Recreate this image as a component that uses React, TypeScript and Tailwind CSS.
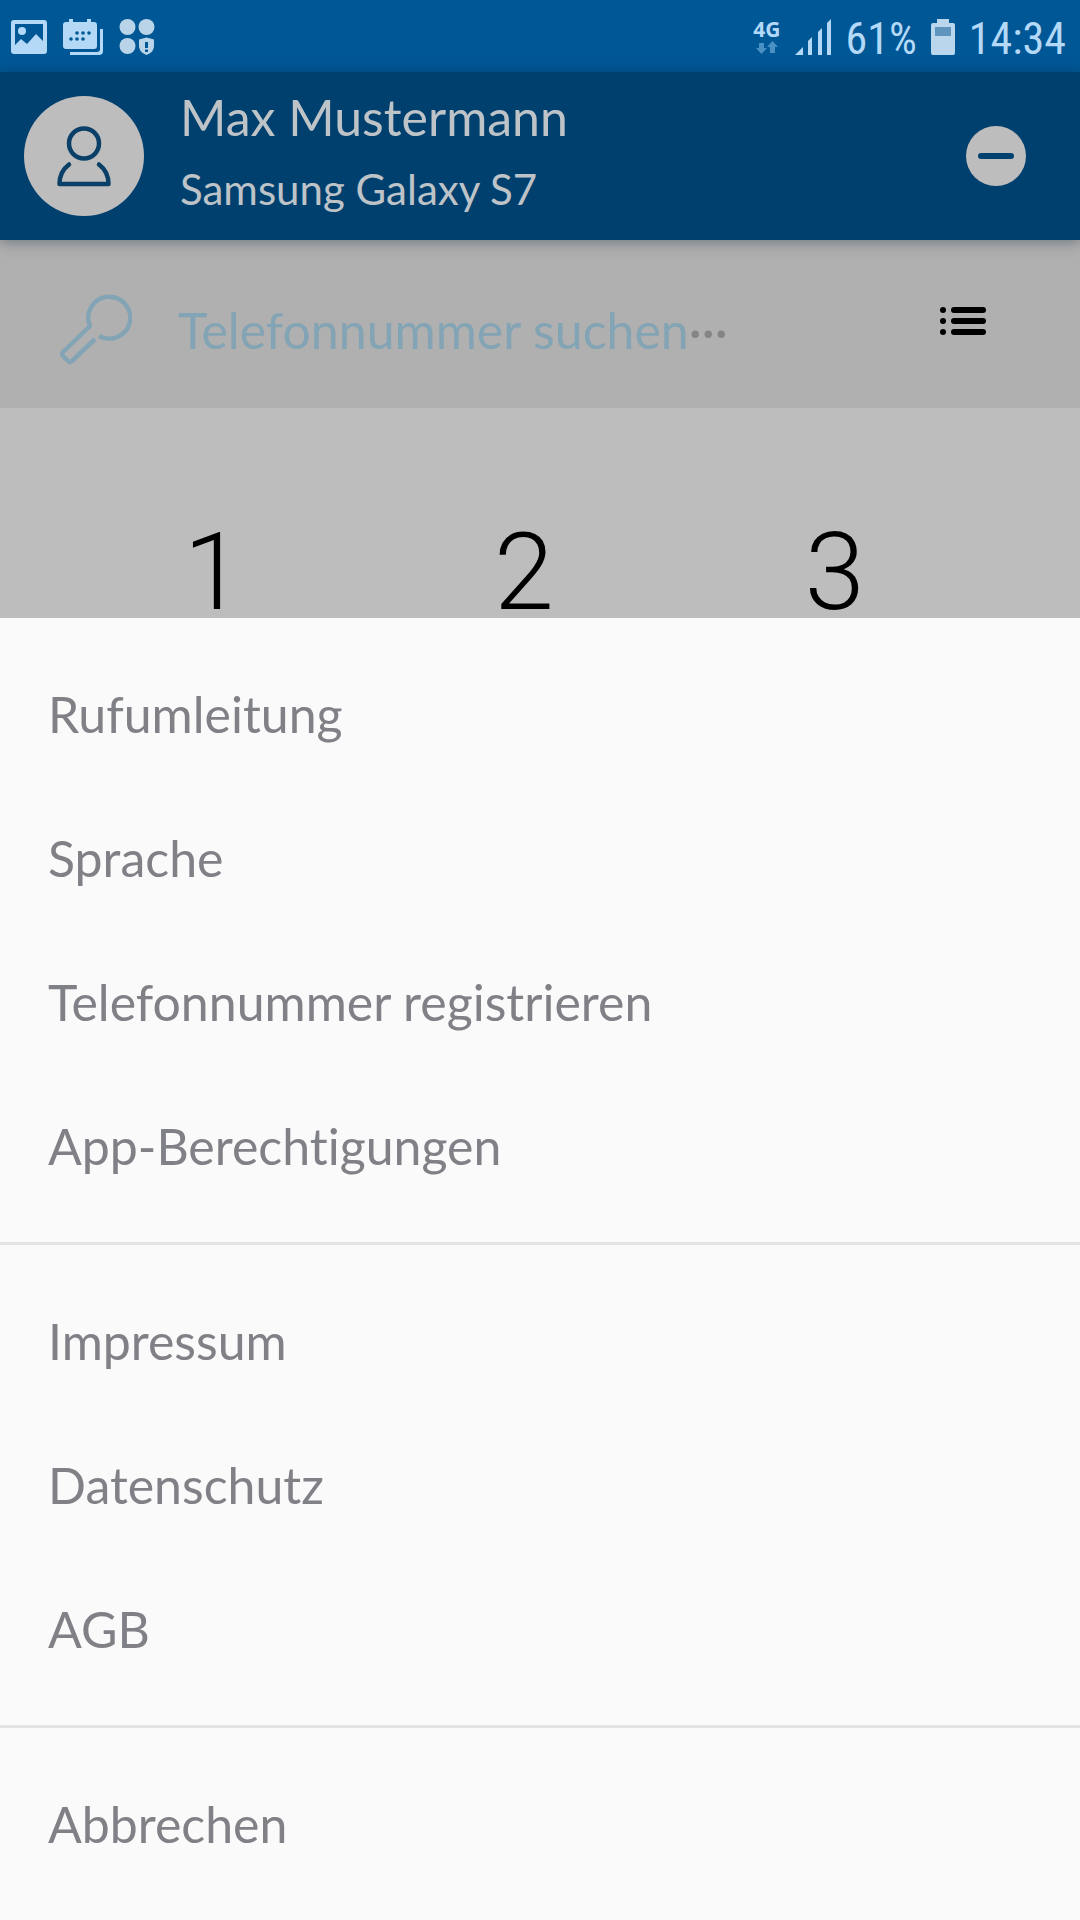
const mainItems = ["Rufumleitung", "Sprache", "Telefonnummer registrieren", "App-Berechtigungen"];
const legalItems = ["Impressum", "Datenschutz", "AGB"];

function StatusBar() {
  return (
    <div className="flex h-[72px] items-center justify-between bg-[#005796] pt-0.5 pr-3.5 pl-[11px] text-[#b3d9f7]">
      <div className="flex items-center gap-4">
        <svg width="36" height="34" viewBox="0 0 36 34" fill="currentColor">
          <path
            fillRule="evenodd"
            d="M3 0h30a3 3 0 0 1 3 3v28a3 3 0 0 1-3 3H3a3 3 0 0 1-3-3V3a3 3 0 0 1 3-3Zm1 4v21l6-6 6 5 9-10 7 7V4Z"
          />
          <circle cx="11" cy="11" r="4" />
        </svg>

        <svg width="40" height="36" viewBox="0 0 40 36">
          <path d="M37 10h3v22a4 4 0 0 1-4 4H7v-3h27a3 3 0 0 0 3-3Z" fill="currentColor" />
          <path d="M3 3h3V0h4v3h14V0h4v3h3a3 3 0 0 1 3 3v21a3 3 0 0 1-3 3H3a3 3 0 0 1-3-3V6a3 3 0 0 1 3-3Z" fill="currentColor" />
          <g fill="#005796">
            <circle cx="14" cy="14" r="1.8" />
            <circle cx="20" cy="14" r="1.8" />
            <circle cx="26" cy="14" r="1.8" />
            <circle cx="8" cy="20" r="1.8" />
            <circle cx="14" cy="20" r="1.8" />
            <circle cx="20" cy="20" r="1.8" />
          </g>
        </svg>

        <svg width="36" height="36" viewBox="0 0 36 36" fill="#b9d4e8">
          <circle cx="8.5" cy="8" r="8" />
          <circle cx="27.5" cy="8" r="8" />
          <circle cx="8.5" cy="27" r="8" />
          <path d="M27.5 18.5 35 20.5V27c0 4.5-3.500 7.5-7.5 9-4-1.500-7.5-4.500-7.5-9v-6.5Z" />
          <path d="M26 23h3v6h-3ZM26 30.500h3v2.500h-3Z" fill="#005796" />
        </svg>
      </div>

      <div className="flex items-center gap-3.5 font-['Roboto_Condensed',Roboto,sans-serif] text-[44px] leading-none">
        <div className="flex flex-col items-center gap-0.5">
          <span className="font-['Noto_Sans',sans-serif] text-[21px] leading-5 font-bold">4G</span>
          <svg width="22" height="14" viewBox="0 0 22 14" fill="#4a90c4">
            <path d="M3 2h5v5h3l-5.500 6L0 7h3Z" />
            <path d="M14 12h5V6h3l-5.500-6L11 6h3Z" />
          </svg>
        </div>
        <svg width="37" height="36" viewBox="0 0 37 36" fill="currentColor">
          <path d="M0 36 8 28v8ZM13 22l4-4v18h-4ZM23 13l4-4v27h-4ZM32 4l4-4v36h-4Z" />
        </svg>
        <span className="pt-1">61%</span>
        <svg width="24" height="36" viewBox="0 0 24 36">
          <path d="M6 0h12v4h4a2 2 0 0 1 2 2v28a2 2 0 0 1-2 2H2a2 2 0 0 1-2-2V6a2 2 0 0 1 2-2h4Z" fill="#b9d6ec" />
          <path d="M4 8h16v9H4Z" fill="#5f94bd" />
        </svg>
        <span className="pt-1">14:34</span>
      </div>
    </div>
  );
}

function Header() {
  return (
    <header className="relative z-10 flex h-[168px] items-center bg-[#00406f] pr-[54px] pl-6 text-[#bdc3c7] shadow-[0_2px_14px_rgba(0,32,48,0.4)]">
      <svg width="120" height="120" viewBox="0 0 120 120" fill="none" stroke="#0a4068" strokeWidth="4.5">
        <circle cx="60" cy="60" r="60" fill="#bdbdbd" stroke="none" />
        <circle cx="60" cy="47.5" r="15" />
        <path d="M45 68.500c-6 4.500-9.500 11-9.500 19.500h49c0-8.500-3.500-15-9.500-19.500" strokeLinecap="round" strokeLinejoin="round" />
      </svg>
      <div className="flex flex-1 flex-col gap-1 pb-1.5 pl-9">
        <h1 className="text-[50px] leading-[68px]">Max Mustermann</h1>
        <p className="text-[42px] leading-[68px]">Samsung Galaxy S7</p>
      </div>
      <button type="button" aria-label="Abmelden">
        <svg width="60" height="60" viewBox="0 0 60 60">
          <circle cx="30" cy="30" r="30" fill="#bdbdbd" />
          <path d="M15 30h30" stroke="#00406f" strokeWidth="6" strokeLinecap="round" />
        </svg>
      </button>
    </header>
  );
}

function SearchBar() {
  return (
    <div className="flex h-[168px] items-center bg-[#b0b0b0] pr-[93px] pl-[60px]">
      <label htmlFor="search" aria-label="Suche" className="pt-2">
        <svg width="72" height="74" viewBox="0 0 72 74" fill="none" stroke="#83a4b4" strokeWidth="4.5" strokeLinejoin="round">
          <path d="M39 45A21 21 0 1 0 30 35L3 61q-2 2 0 4l5 5q2 2 4 0L35 48" />
        </svg>
      </label>
      <div className="flex flex-1 items-center pt-3 pl-[46px] text-[50px] leading-[60px]">
        <input
          id="search"
          type="search"
          placeholder="Telefonnummer suchen"
          className="field-sizing-content outline-none placeholder:text-[#83a4b4] placeholder:opacity-100"
        />
        <span className="text-[#858585]">···</span>
      </div>
      <button type="button" aria-label="Liste" className="pb-1.5">
        <svg width="48" height="30" viewBox="0 0 48 30" stroke="#000" strokeWidth="6" strokeLinecap="round">
          <path d="M4 4h.01M4 15h.01M4 26h.01M15 4h29M15 15h29M15 26h29" />
        </svg>
      </button>
    </div>
  );
}

function MenuGroup({ items }: { items: string[] }) {
  return (
    <ul className="py-6">
      {items.map((item) => (
        <li key={item}>
          <button type="button" className="h-36 w-full pl-12 text-left text-[50px] leading-[60px]">
            {item}
          </button>
        </li>
      ))}
    </ul>
  );
}

export default function App() {
  return (
    <div className="flex min-h-screen flex-col bg-[#bdbdbd] font-[Lato,sans-serif] [font-variant-ligatures:none]">
      <StatusBar />
      <Header />
      <SearchBar />

      {/* Dial pad, mostly covered by the menu sheet */}
      <div className="grid flex-1 grid-cols-3 items-end pr-[90px] pl-[58px] font-[Roboto,sans-serif] text-[108px] leading-[92px] font-light">
        <button type="button">1</button>
        <button type="button">2</button>
        <button type="button">3</button>
      </div>

      <nav className="divide-y-3 divide-[#e4e4e4] bg-[#fafafa] text-[#808087]">
        <MenuGroup items={mainItems} />
        <MenuGroup items={legalItems} />
        <MenuGroup items={["Abbrechen"]} />
      </nav>
    </div>
  );
}
